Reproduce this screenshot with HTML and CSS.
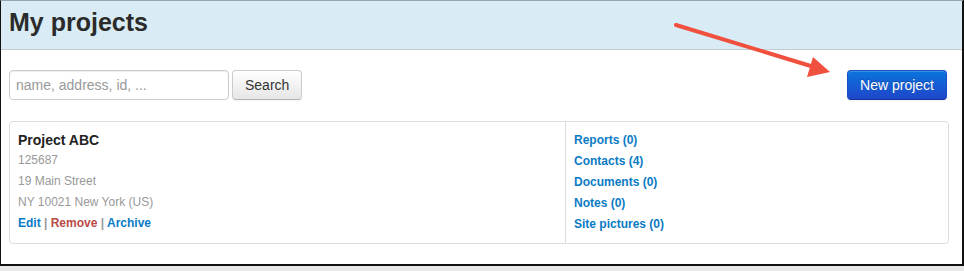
FILE: index.html
```html
<!DOCTYPE html>
<html lang="en">
<head>
    <meta charset="UTF-8">
    <meta name="viewport" content="width=device-width, initial-scale=1.0">
    <title>My projects</title>
    <link rel="stylesheet" href="styles.css">
</head>
<body>
    <div class="frame">
        <header class="page-header">
            <h1>My projects</h1>
        </header>

        <main class="container">
            <div class="toolbar">
                <form class="search-form" onsubmit="return false">
                    <input type="text" class="search-input" placeholder="name, address, id, ...">
                    <button class="btn">Search</button>
                </form>
                <button class="btn btn-primary">New project</button>
            </div>

            <div class="project-card">
                <div class="project-info">
                    <h3>Project ABC</h3>
                    <p>125687</p>
                    <p>19 Main Street</p>
                    <p>NY 10021 New York (US)</p>
                    <div class="project-actions">
                        <a href="#">Edit</a> | <a href="#" class="danger">Remove</a> | <a href="#">Archive</a>
                    </div>
                </div>
                <ul class="project-links">
                    <li><a href="#">Reports (0)</a></li>
                    <li><a href="#">Contacts (4)</a></li>
                    <li><a href="#">Documents (0)</a></li>
                    <li><a href="#">Notes (0)</a></li>
                    <li><a href="#">Site pictures (0)</a></li>
                </ul>
            </div>
        </main>

        <!-- Annotation arrow -->
        <svg class="arrow" width="964" height="120" viewBox="0 0 964 120">
            <line x1="676" y1="25" x2="814" y2="67" stroke="#f0503e" stroke-width="4" stroke-linecap="round"/>
            <polygon points="830,72 807,77 813,57" fill="#f0503e"/>
        </svg>
    </div>
</body>
</html>
```

FILE: styles.css
```css
body {
    margin: 0;
    padding: 0;
    background-color: #e8e8e8;
    font-family: "Liberation Sans", Arial, sans-serif;
    color: #333;
}
.frame {
    position: relative;
    box-sizing: border-box;
    width: 964px;
    height: 266px;
    background-color: #fff;
    border-top: 1px solid #9aa6ac;
    border-left: 1px solid #111;
    border-right: 2px solid #111;
    border-bottom: 2px solid #111;
}
.page-header {
    background-color: #d9ecf5;
    border-bottom: 1px solid #c4cdd2;
    height: 49px;
    box-sizing: border-box;
    padding: 6px 8px 0;
}
.page-header h1 {
    margin: 0;
    font-size: 25px;
    line-height: 30px;
    font-weight: bold;
    color: #2b2b2b;
}
.container {
    width: 940px;
    padding: 20px 0 0 8px;
}
.toolbar {
    display: flex;
    justify-content: space-between;
    align-items: center;
    padding-right: 2px;
}
.search-form {
    display: flex;
    gap: 3px;
    margin: 0;
}
.search-input {
    box-sizing: border-box;
    width: 220px;
    height: 30px;
    padding: 4px 6px;
    border: 1px solid #ccc;
    border-radius: 4px;
    box-shadow: inset 0 1px 1px rgba(0, 0, 0, 0.075);
    font-family: inherit;
    font-size: 14px;
    color: #555;
}
.search-input::placeholder {
    color: #999;
}
.btn {
    box-sizing: border-box;
    height: 30px;
    padding: 0 12px;
    font-family: inherit;
    font-size: 14px;
    color: #333;
    background: linear-gradient(#fff, #e6e6e6);
    border: 1px solid #ccc;
    border-bottom-color: #b3b3b3;
    border-radius: 4px;
    box-shadow: inset 0 1px 0 rgba(255, 255, 255, 0.2), 0 1px 2px rgba(0, 0, 0, 0.05);
    cursor: pointer;
}
.btn-primary {
    width: 100px;
    color: #fff;
    text-shadow: 0 -1px 0 rgba(0, 0, 0, 0.25);
    background: linear-gradient(#0a74dd, #1f46c9);
    border-color: #1a4fc4 #1a4fc4 #12339a;
}
.project-card {
    display: grid;
    grid-template-columns: 556px 1fr;
    margin-top: 21px;
    border: 1px solid #ddd;
    border-radius: 4px;
    font-size: 12px;
    line-height: 21px;
}
.project-info {
    padding: 8px 8px 7px;
    border-right: 1px solid #ddd;
}
.project-info h3 {
    margin: 0;
    font-size: 14px;
    line-height: 20px;
    color: #222;
}
.project-info p {
    margin: 0;
    color: #999;
}
.project-actions {
    font-weight: bold;
    color: #999;
}
.project-actions a,
.project-links a {
    color: #0a7bc4;
    text-decoration: none;
    font-weight: bold;
}
.project-actions a.danger {
    color: #b94a48;
}
.project-links {
    list-style: none;
    margin: 0;
    padding: 8px 8px;
}
.arrow {
    position: absolute;
    left: -1px;
    top: -1px;
    pointer-events: none;
}
```
